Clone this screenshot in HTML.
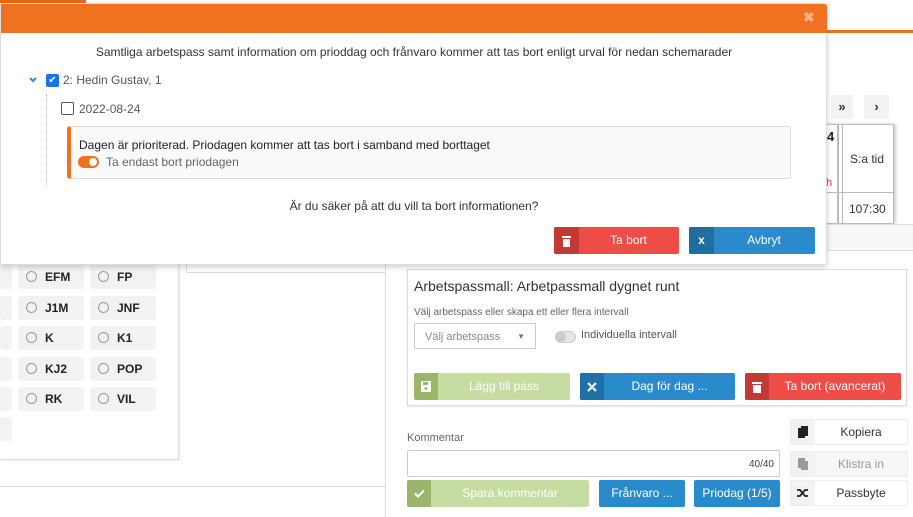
<!DOCTYPE html>
<html><head><meta charset="utf-8"><style>
*{box-sizing:border-box;margin:0;padding:0}
body{width:913px;height:517px;position:relative;overflow:hidden;background:#fff;font-family:"Liberation Sans",sans-serif;font-size:12px;color:#333}
.a{position:absolute}
.rb{position:absolute;background:#f2f2f2;border-radius:3px;height:24px;font-weight:bold;font-size:12px;color:#222;line-height:24px}
.rb i{position:absolute;left:8px;top:6px;width:11px;height:11px;border:1px solid #999;border-radius:50%}
.rb span{position:absolute;left:27px}
.btn{position:absolute;color:#fff;font-size:12px;text-align:center;border-radius:2px;overflow:hidden;padding-left:24px}
.btn .ic{position:absolute;left:0;top:0;bottom:0;width:24px;background:rgba(0,0,0,.15);display:flex;align-items:center;justify-content:center}
.sb{position:absolute;background:#fff;border:1px solid #eee;height:26px;font-size:12px;color:#333}
.sb .ic{position:absolute;left:0;top:0;bottom:0;width:24px;background:#f2f2f2;display:flex;align-items:center;justify-content:center}
.sb span{position:absolute;left:24px;right:0;text-align:center;line-height:25px}
</style></head><body>
<div class="a" style="left:0;top:0;width:86px;height:3px;background:#e8681a"></div>
<div class="a" style="left:826px;top:30px;width:87px;height:3px;background:#f07020"></div>
<div class="a" style="left:831px;top:95px;width:22px;height:24px;background:#f2f2f2;font-weight:bold;text-align:center;line-height:23px;font-size:13px">»</div>
<div class="a" style="left:864px;top:95px;width:25px;height:24px;background:#f2f2f2;font-weight:bold;text-align:center;line-height:23px;font-size:13px">›</div>
<div class="a" style="left:826px;top:124px;width:68px;height:100px;border:1px solid #bbb;border-left:none;box-shadow:2px 0 3px rgba(0,0,0,.2)"></div>
<div class="a" style="left:837px;top:124px;width:2px;height:100px;background:#bbb"></div>
<div class="a" style="left:842px;top:124px;width:1px;height:100px;background:#bbb"></div>
<div class="a" style="left:826px;top:192px;width:68px;height:1px;background:#bbb"></div>
<div class="a" style="left:827px;top:129px;font-weight:bold;font-size:13px;color:#222">4</div>
<div class="a" style="left:826px;top:177px;color:#e33;font-size:11px">h</div>
<div class="a" style="left:850px;top:152px;font-size:12px">S:a tid</div>
<div class="a" style="left:849px;top:202px;font-size:12px">107:30</div>
<div class="a" style="left:826px;top:224px;width:87px;height:27px;background:#f7f7f7;border-top:1px solid #ddd;border-bottom:1px solid #ddd"></div>

<div class="a" style="left:186px;top:245px;width:200px;height:28px;border:1px solid #ddd;border-top:none"></div>
<div class="a" style="left:0;top:250px;width:179px;height:210px;border-right:1px solid #ddd;border-bottom:1px solid #ddd;box-shadow:1px 1px 2px rgba(0,0,0,.08)"></div>
<div class="a" style="left:0;top:486px;width:386px;height:1px;background:#ddd"></div>
<div class="a" style="left:385px;top:250px;width:1px;height:267px;background:#ddd"></div>

<div class="rb" style="left:0;top:265px;width:12px"></div>
<div class="rb" style="left:0;top:296px;width:12px"></div>
<div class="rb" style="left:0;top:326px;width:12px"></div>
<div class="rb" style="left:0;top:357px;width:12px"></div>
<div class="rb" style="left:0;top:387px;width:12px"></div>
<div class="rb" style="left:0;top:417px;width:12px"></div>
<div class="rb" style="left:18px;top:265px;width:66px"><i></i><span>EFM</span></div>
<div class="rb" style="left:90px;top:265px;width:66px"><i></i><span>FP</span></div>
<div class="rb" style="left:18px;top:296px;width:66px"><i></i><span>J1M</span></div>
<div class="rb" style="left:90px;top:296px;width:66px"><i></i><span>JNF</span></div>
<div class="rb" style="left:18px;top:326px;width:66px"><i></i><span>K</span></div>
<div class="rb" style="left:90px;top:326px;width:66px"><i></i><span>K1</span></div>
<div class="rb" style="left:18px;top:357px;width:66px"><i></i><span>KJ2</span></div>
<div class="rb" style="left:90px;top:357px;width:66px"><i></i><span>POP</span></div>
<div class="rb" style="left:18px;top:387px;width:66px"><i></i><span>RK</span></div>
<div class="rb" style="left:90px;top:387px;width:66px"><i></i><span>VIL</span></div>

<div class="a" style="left:407px;top:269px;width:500px;height:137px;border:1px solid #ddd;box-shadow:0 1px 2px rgba(0,0,0,.1)"></div>
<div class="a" style="left:414px;top:278px;font-size:14px;color:#333">Arbetspassmall: Arbetpassmall dygnet runt</div>
<div class="a" style="left:414px;top:307px;font-size:10px;color:#666">Välj arbetspass eller skapa ett eller flera intervall</div>
<div class="a" style="left:414px;top:323px;width:122px;height:26px;border:1px solid #ccc;font-size:11px;color:#888;padding:7px 10px">Välj arbetspass<span style="position:absolute;right:10px;top:8px;font-size:8px;color:#777">▼</span></div>
<div class="a" style="left:555px;top:331px;width:21px;height:12px;border-radius:6px;background:#e6e6e6;border:1px solid #ccc"><div style="width:10px;height:10px;border-radius:50%;background:#ccc"></div></div>
<div class="a" style="left:581px;top:329px;font-size:11px;color:#555">Individuella intervall</div>
<div class="btn" style="left:414px;top:373px;width:156px;height:27px;background:#c7dca0;line-height:27px"><div class="ic" style="background:#9bb56a"><svg width="10" height="11" viewBox="0 0 10 11"><rect x="0" y="0" width="10" height="11" rx="1" fill="#fff"/><rect x="2" y="1" width="5" height="3" fill="#9bb56a"/><circle cx="5" cy="7.5" r="1.5" fill="#9bb56a"/></svg></div>Lägg till pass</div>
<div class="btn" style="left:580px;top:373px;width:155px;height:27px;background:#2a8bcc;line-height:27px"><div class="ic" style="background:#2070a8"><svg width="12" height="12" viewBox="0 0 12 12" stroke="#fff" stroke-width="2.2"><path d="M2 10L10 2M2 2l3 3M7 7l3 3"/></svg></div>Dag för dag ...</div>
<div class="btn" style="left:745px;top:373px;width:156px;height:27px;background:#ee4d47;line-height:27px"><div class="ic" style="background:#c23a36"><svg width="10" height="12" viewBox="0 0 10 12" fill="#fff"><rect x="0" y="1" width="10" height="2"/><rect x="1" y="4" width="8" height="8"/></svg></div>Ta bort (avancerat)</div>

<div class="a" style="left:407px;top:432px;font-size:11px;color:#666">Kommentar</div>
<div class="a" style="left:407px;top:450px;width:373px;height:27px;border:1px solid #ccc;border-radius:2px"><span style="position:absolute;right:5px;top:8px;font-size:10px;color:#444">40/40</span></div>
<div class="btn" style="left:407px;top:480px;width:182px;height:27px;background:#c7dca0;line-height:27px"><div class="ic" style="background:#9bb56a"><svg width="11" height="9" viewBox="0 0 11 9" fill="none" stroke="#fff" stroke-width="2"><path d="M1 4.5l3 3 6-6"/></svg></div>Spara kommentar</div>
<div class="btn" style="left:599px;top:480px;width:86px;height:27px;background:#2a8bcc;line-height:27px;padding-left:0">Frånvaro ...</div>
<div class="btn" style="left:694px;top:480px;width:86px;height:27px;background:#2a8bcc;line-height:27px;padding-left:0">Priodag (1/5)</div>
<div class="sb" style="left:790px;top:419px;width:118px"><div class="ic"><svg width="10" height="12" viewBox="0 0 10 12" fill="#222"><rect x="0" y="2" width="7" height="10"/><rect x="3" y="0" width="7" height="10"/></svg></div><span>Kopiera</span></div>
<div class="sb" style="left:790px;top:451px;width:118px;background:#f7f7f7"><div class="ic"><svg width="10" height="12" viewBox="0 0 10 12" fill="#999"><rect x="0" y="0" width="7" height="10"/><rect x="3" y="3" width="7" height="9"/></svg></div><span style="color:#999">Klistra in</span></div>
<div class="sb" style="left:790px;top:480px;width:118px"><div class="ic"><svg width="12" height="10" viewBox="0 0 12 10" fill="none" stroke="#222" stroke-width="1.8"><path d="M0 2h3l5 6h3M0 8h3l5-6h3"/></svg></div><span>Passbyte</span></div>

<div class="a" style="left:0;top:3px;width:827px;height:262px;background:#fff;border:1px solid #ddd;border-radius:0 3px 3px 0;box-shadow:0 2px 6px rgba(0,0,0,.2)">
<div class="a" style="left:0;top:0;width:826px;height:29px;background:#f0711f;border-radius:0 3px 0 0"></div>
<div class="a" style="left:802px;top:5px;font-size:14px;font-weight:bold;color:#f7b088">✖</div>
<div class="a" style="left:0;top:41px;width:826px;text-align:center;font-size:12px;color:#333">Samtliga arbetspass samt information om prioddag och frånvaro kommer att tas bort enligt urval för nedan schemarader</div>
<svg class="a" style="left:28px;top:73px" width="8" height="6" viewBox="0 0 8 6" fill="none" stroke="#2a8bcc" stroke-width="2"><path d="M1 1l3 3 3-3"/></svg>
<div class="a" style="left:45px;top:70px;width:13px;height:13px;background:#1a73e8;border-radius:2px;color:#fff;font-size:10px;line-height:13px;text-align:center">✔</div>
<div class="a" style="left:62px;top:69px;color:#555;font-size:12px">2: Hedin Gustav, 1</div>
<div class="a" style="left:45px;top:90px;width:0;height:92px;border-left:1px dotted #bbb"></div>
<div class="a" style="left:60px;top:98px;width:13px;height:13px;border:1.5px solid #555;border-radius:2px"></div>
<div class="a" style="left:78px;top:98px;color:#555;font-size:12px">2022-08-24</div>
<div class="a" style="left:66px;top:122px;width:724px;height:53px;background:#fafafa;border:1px solid #ddd;border-left:4px solid #f0711f;border-radius:3px"></div>
<div class="a" style="left:78px;top:134px;font-size:12px;color:#222">Dagen är prioriterad. Priodagen kommer att tas bort i samband med borttaget</div>
<div class="a" style="left:77px;top:152px;width:21px;height:12px;border-radius:6px;background:#f0711f"><div style="position:absolute;right:2px;top:2px;width:8px;height:8px;border-radius:50%;background:#fff"></div></div>
<div class="a" style="left:105px;top:151px;font-size:12px;color:#666">Ta endast bort priodagen</div>
<div class="a" style="left:0;top:195px;width:826px;text-align:center;font-size:12px;color:#333">Är du säker på att du vill ta bort informationen?</div>
<div class="btn" style="left:553px;top:223px;width:125px;height:27px;background:#ee4d47;line-height:27px"><div class="ic" style="background:#c23a36;width:25px"><svg width="9" height="12" viewBox="0 0 9 12" fill="#fff"><rect x="0" y="1" width="9" height="2"/><rect x="1" y="4" width="7" height="8"/></svg></div>Ta bort</div>
<div class="btn" style="left:688px;top:223px;width:126px;height:27px;background:#2a8bcc;line-height:27px"><div class="ic" style="background:#1f6e9f;width:25px;font-weight:bold">x</div>Avbryt</div>
</div>
</body></html>
